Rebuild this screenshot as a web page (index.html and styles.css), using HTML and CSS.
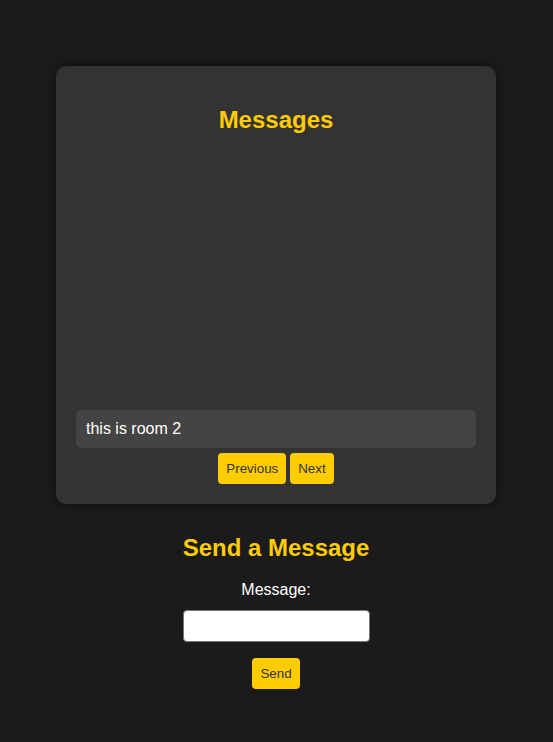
FILE: index.html
```html
<!DOCTYPE html>
<html lang="en">
<head>
<meta charset="utf-8">
<title>Chat</title>
<link rel="stylesheet" href="styles.css">
</head>
<body>
<main class="page">
  <section class="card">
    <h2 class="title">Messages</h2>
    <div class="messages">
      <div class="message">this is room 2</div>
    </div>
    <div class="pager">
      <button class="btn">Previous</button>
      <button class="btn">Next</button>
    </div>
  </section>
  <section class="send">
    <h2 class="title">Send a Message</h2>
    <label class="label" for="msg">Message:</label>
    <input class="input" id="msg" type="text">
    <button class="btn">Send</button>
  </section>
</main>
</body>
</html>
```
FILE: styles.css
```css
html, body {
  margin: 0;
  padding: 0;
  background: #1b1b1b;
  font-family: "Liberation Sans", Arial, sans-serif;
  color: #fff;
}
.page {
  padding-top: 66px;
  padding-right: 1px;
  display: flex;
  flex-direction: column;
  align-items: center;
}
.card {
  width: 440px;
  box-sizing: border-box;
  padding: 20px;
  background: #333333;
  border-radius: 10px;
  box-shadow: 0 0 10px rgba(0, 0, 0, 0.5);
}
.title {
  margin: 20px 0;
  font-size: 24px;
  font-weight: bold;
  color: #ffcc00;
  text-align: center;
  line-height: 28px;
}
.messages {
  height: 299px;
  display: flex;
  flex-direction: column;
  justify-content: flex-end;
}
.message {
  background: #444444;
  border-radius: 5px;
  padding: 10px;
  font-size: 16px;
  line-height: 18px;
  margin-bottom: 5px;
}
.pager {
  display: flex;
  justify-content: center;
  gap: 4px;
}
.btn {
  font-family: "Liberation Sans", Arial, sans-serif;
  font-size: 13.33px;
  line-height: 15px;
  padding: 8px;
  border: none;
  border-radius: 4px;
  background: #ffcc00;
  color: #333333;
}
.send {
  margin-top: 10px;
  display: flex;
  flex-direction: column;
  align-items: center;
}
.send .title {
  margin: 20px 0 19px;
}
.label {
  font-size: 16px;
  line-height: 18px;
  margin-bottom: 11px;
}
.input {
  width: 187px;
  height: 32px;
  box-sizing: border-box;
  border: 1px solid #767676;
  border-radius: 4px;
  background: #fff;
  margin: 0 0 16px;
}
```
